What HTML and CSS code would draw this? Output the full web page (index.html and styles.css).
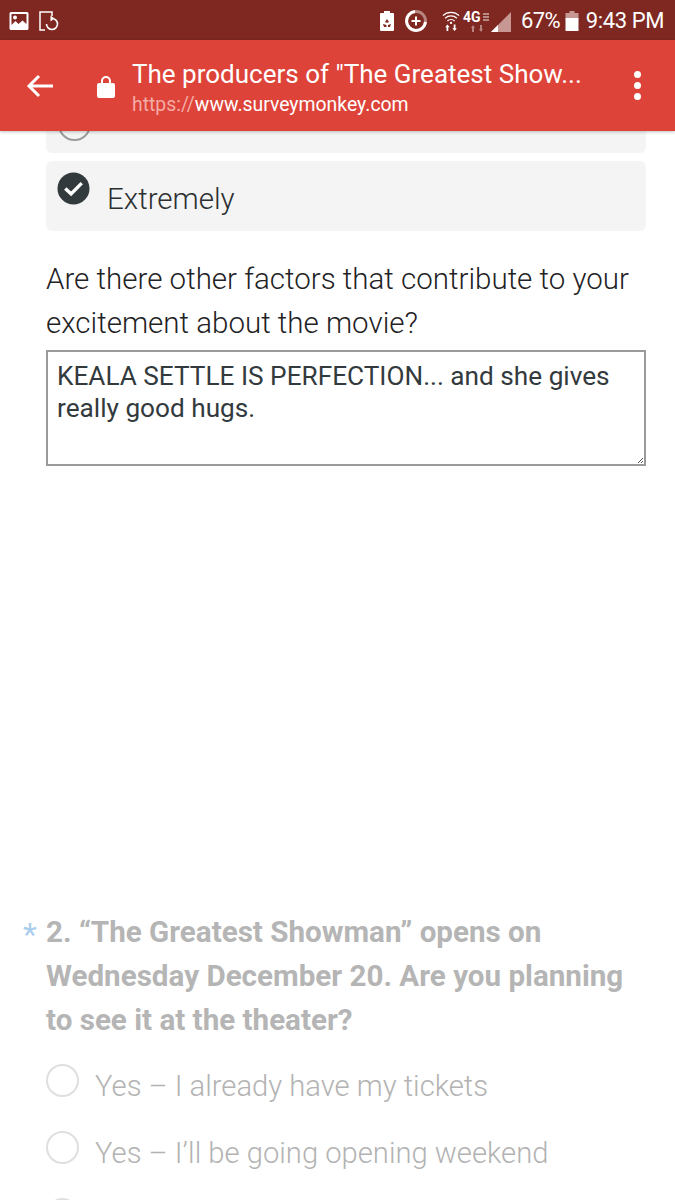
FILE: index.html
```html
<!DOCTYPE html>
<html lang="en">
<head>
<meta charset="utf-8">
<title>SurveyMonkey</title>
<link rel="stylesheet" href="styles.css">
</head>
<body>
<div class="phone">
  <div class="status">
    <div class="status-left">
      <svg class="ic" width="20" height="20" viewBox="0 0 20 20"><path fill="#fff" fill-rule="evenodd" d="M2 1h16a1.500 1.500 0 0 1 1.500 1.500v15A1.500 1.500 0 0 1 18 19H2a1.500 1.500 0 0 1-1.500-1.500v-15A1.500 1.500 0 0 1 2 1zM2.500 3v11l4-4 3 3 4-3.500 4 3.500V3z"/><circle cx="6" cy="6.500" r="2" fill="#fff"/></svg>
      <svg class="ic" width="20" height="20" viewBox="0 0 20 20"><path fill="none" stroke="#fff" stroke-width="1.500" d="M6 19H1V1h12v4"/><path fill="none" stroke="#fff" stroke-width="1.600" d="M13 7.500a5.500 5.500 0 1 1-5.500 5.500"/><path fill="#fff" d="M11.500 4.500l4 3-4 3z"/></svg>
    </div>
    <div class="status-right">
      <svg class="ic" width="14" height="20" viewBox="0 0 14 20"><path fill="#fff" fill-rule="evenodd" d="M4 0h6v2h3a1 1 0 0 1 1 1v16a1 1 0 0 1-1 1H1a1 1 0 0 1-1-1V3a1 1 0 0 1 1-1h3zM7 8l-2 3 1.500 1L7 10.500 7.500 12l1.500-1zM3 13l1 3h2.500v-2zM11 13l-3 1v2h2z"/></svg>
      <svg class="ic plus" width="24" height="24" viewBox="0 0 24 24"><circle cx="12" cy="12" r="9.500" fill="none" stroke="#b78480" stroke-width="3"/><path fill="none" stroke="#fff" stroke-width="3" d="M21.500 13A9.500 9.500 0 1 1 11 2.500"/><path stroke="#fff" stroke-width="2" d="M12 7.500v9M7.500 12h9"/></svg>
      <svg class="ic wifi" width="18" height="22" viewBox="0 0 20 24"><path fill="none" stroke="#fff" stroke-width="1.400" d="M1 6a13 13 0 0 1 18 0M3.500 9a9.500 9.500 0 0 1 13 0M6 12a6 6 0 0 1 8 0"/><circle cx="10" cy="14" r="1.300" fill="#fff"/><path fill="#fff" d="M6 16l2.500 3H7v4H5v-4H3.500zM14 23l-2.500-3H13v-4h2v4h1.500z"/></svg>
      <div class="net">
        <span class="net-label">4G</span>
        <svg class="net-eq" width="6" height="8" viewBox="0 0 6 8"><path stroke="#fff" stroke-width="1.300" opacity=".6" d="M0 1h6M0 4h6M0 7h6"/></svg>
        <svg class="net-arrows" width="14" height="7" viewBox="0 0 14 7"><path fill="#b78480" d="M0 3l2-3 2 3H3v4H1V3zM8 4l2 3 2-3h-1V0H9v4z"/></svg>
      </div>
      <svg class="ic signal" width="20" height="20" viewBox="0 0 20 20"><path fill="#c79793" d="M20 0v20H0z"/><path fill="#fff" d="M0 20l7-7v7z"/></svg>
      <span class="pct">67%</span>
      <svg class="ic batt" width="14" height="20" viewBox="0 0 13 20"><path fill="#c79793" d="M4 0h5v2h4v6H0V2h4z"/><path fill="#fff" d="M0 7h13v13H0z"/></svg>
      <span class="clock">9:43 PM</span>
    </div>
  </div>
  <header class="toolbar">
    <svg class="back" width="28" height="24" viewBox="0 0 28 24"><path fill="none" stroke="#fff" stroke-width="3" d="M27 12H3M13 2L3 12l10 10"/></svg>
    <svg class="lock" width="18" height="23" viewBox="0 0 18 23"><path fill="#fff" fill-rule="evenodd" d="M4 8V6a5 5 0 0 1 10 0v2h2a2 2 0 0 1 2 2v11a2 2 0 0 1-2 2H2a2 2 0 0 1-2-2V10a2 2 0 0 1 2-2zm2 0h6V6a3 3 0 0 0-6 0z"/></svg>
    <div class="titles">
      <div class="title">The producers of "The Greatest Show...</div>
      <div class="url"><span class="scheme">https://</span>www.surveymonkey.com</div>
    </div>
    <div class="dots"><i></i><i></i><i></i></div>
  </header>
  <main class="content">
    <div class="option-card cut"><span class="radio dark"></span></div>
    <div class="option-card selected">
      <svg class="check" width="33" height="33" viewBox="0 0 34 34"><circle cx="17" cy="17" r="16.500" fill="#333a3d"/><path fill="none" stroke="#fff" stroke-width="3.500" d="M8.500 17l6 5.500 11-11"/></svg>
      <span class="option-text">Extremely</span>
    </div>
    <p class="question">Are there other factors that contribute to your excitement about the movie?</p>
    <div class="answer">KEALA SETTLE IS PERFECTION... and she gives really good hugs.<svg class="grip" width="5" height="5" viewBox="0 0 5 5"><path stroke="#555" d="M0 5l5-5M3 5l2-2"/></svg></div>
    <section class="q2">
      <span class="star">*</span>
      <h2 class="q2-title">2. “The Greatest Showman” opens on Wednesday December 20. Are you planning to see it at the theater?</h2>
      <div class="choice"><span class="radio"></span><span class="choice-text">Yes – I already have my tickets</span></div>
      <div class="choice"><span class="radio"></span><span class="choice-text">Yes – I’ll be going opening weekend</span></div>
      <div class="choice"><span class="radio"></span></div>
    </section>
  </main>
</div>
</body>
</html>
```
FILE: styles.css
```css
* { box-sizing: border-box; }
html, body { margin: 0; padding: 0; background: #fff; }
.phone { width: 675px; height: 1200px; overflow: hidden; font-family: Roboto, "Liberation Sans", sans-serif; color: #333a3d; }
.ic { display: block; flex: none; }

.status { height: 40px; background: #7e2821; display: flex; justify-content: space-between; align-items: center; padding: 2px 11px 0 9px; color: #fff; }
.status-left { display: flex; align-items: center; gap: 10px; }
.status-right { display: flex; align-items: center; }
.plus { margin-left: 10px; }
.wifi { margin-left: 14px; }
.net { position: relative; width: 26px; height: 24px; margin-left: 3px; }
.net-label { position: absolute; left: 0; top: 2px; font-size: 14px; font-weight: 700; line-height: 13px; }
.net-eq { position: absolute; right: 0; top: 4px; }
.net-arrows { position: absolute; left: 8px; top: 16px; }
.signal { margin-left: 2px; margin-top: 1px; }
.pct { font-size: 22px; line-height: 28px; margin-left: 10px; letter-spacing: -0.7px; }
.batt { margin-left: 5px; }
.clock { font-size: 22px; line-height: 28px; margin-left: 7px; letter-spacing: -0.4px; }

.toolbar { height: 91px; background: #dd4338; display: flex; align-items: center; padding-left: 26px; box-shadow: 0 1px 3px rgba(0,0,0,.25); position: relative; color: #fff; }
.back { flex: none; }
.lock { flex: none; margin-left: 43px; margin-top: 2px; }
.titles { flex: none; width: 470px; margin-left: 17px; margin-top: 3px; }
.title { font-size: 26px; line-height: 34px; white-space: nowrap; }
.url { font-size: 19.400px; line-height: 27px; white-space: nowrap; }
.scheme { color: #f4aca6; }
.dots { flex: none; margin-left: 32px; display: flex; flex-direction: column; gap: 4px; }
.dots i { display: block; width: 7px; height: 7px; border-radius: 50%; background: #fff; }

.content { padding: 0 29px 0 46px; }
.option-card { background: #f4f4f4; border-radius: 6px; }
.cut { height: 22px; overflow: hidden; border-radius: 0 0 6px 6px; padding-left: 12px; }
.radio { display: block; flex: none; width: 33px; height: 33px; border-radius: 50%; border: 2px solid #dfdfdf; background: #fff; }
.radio.dark { border-color: #9b9b9b; background: transparent; margin-top: -23px; }
.selected { height: 70px; margin-top: 8px; display: flex; padding: 11px 0 0 11px; }
.check { display: block; flex: none; }
.option-text { font-size: 29.500px; font-weight: 300; line-height: 34px; margin-left: 17px; margin-top: 10px; color: #2b2f31; }
.question { margin: 26px 0 0; font-size: 29.500px; font-weight: 300; line-height: 44px; color: #1f2325; }
.answer { position: relative; height: 116px; margin-top: 5px; border: 2px solid #9a9a9a; padding: 8px 9px; font-size: 26.200px; line-height: 32px; color: #333a3d; }
.grip { position: absolute; right: 1px; bottom: 1px; }

.q2 { position: relative; margin-top: 444px; }
.star { position: absolute; left: -23px; top: 2px; font-size: 32px; line-height: 44px; color: #a9cdec; }
.q2-title { margin: 0 0 22px; font-size: 29.600px; font-weight: 700; line-height: 44px; color: #b5b5b5; }
.choice { display: flex; align-items: flex-start; height: 67px; }
.choice-text { font-size: 29.200px; font-weight: 300; line-height: 40px; margin-left: 16px; margin-top: 2px; color: #b3b3b3; }
```
